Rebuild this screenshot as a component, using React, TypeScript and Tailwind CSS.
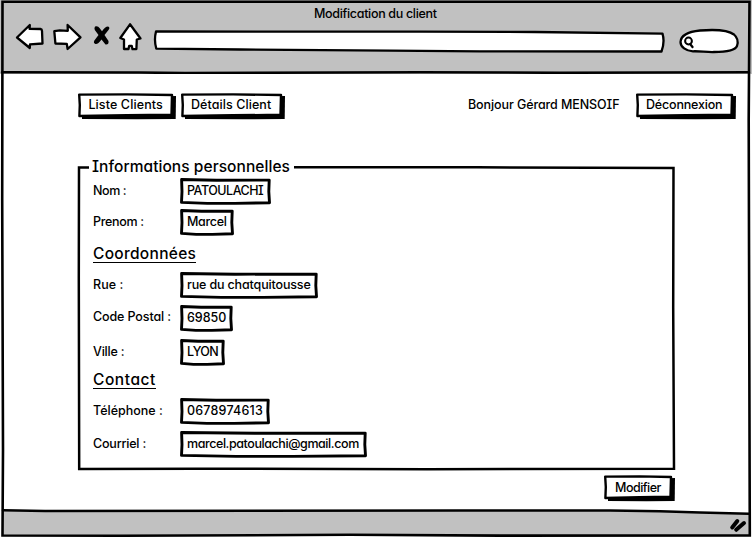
import type { ReactNode } from 'react';

const label = 'whitespace-nowrap text-[12.5px] font-medium leading-[16px]';

function SketchBox({ w, h }: { w: number; h: number }) {
  return (
    <svg className="absolute inset-0" width={w} height={h} fill="none" stroke="#000" strokeWidth="2.9" strokeLinejoin="round">
      <path
        d={`M1.6 1.5 L${w * 0.4} 2.2 L${w - 1.8} 2.1 L${w - 2.2} ${h * 0.5} L${w - 1.5} ${h - 2.3} L${w * 0.6} ${h - 1.6} L${w * 0.3} ${h - 1.6} L1.5 ${h - 2.6} L2 ${h * 0.5} Z`}
        fill="#fff"
      />
    </svg>
  );
}

function Field({ name, value, w, h = 27, nameCls, valueCls, cls, textTop = 'pt-[5px]' }: {
  name: string; value: string; w: number; h?: number; nameCls: string; valueCls: string; cls: string; textTop?: string;
}) {
  return (
    <div className={`flex ${cls}`}>
      <div className={`w-[87px] ${textTop} ${label} ${nameCls}`}>{name}</div>
      <div className="relative" style={{ width: w, height: h }}>
        <SketchBox w={w} h={h} />
        <div className={`relative pl-[7px] pt-[5px] ${label} ${valueCls}`}>{value}</div>
      </div>
    </div>
  );
}

function SketchButton({ w, children, cls }: { w: number; children: ReactNode; cls: string }) {
  return (
    <button className="relative block h-[27px] text-left" style={{ width: w }}>
      <svg className="absolute inset-0" width={w} height="27">
        <path d={`M4 5 L${w} 3 L${w - 0.3} 26 L${w * 0.6} 26.3 L4 26 Z`} />
        <path
          d={`M1.2 1.6 L${w * 0.5} 1.4 L${w - 4} 2 L${w - 4.5} 21.8 L${w * 0.5} 22.3 L1.4 23 L1.8 12 Z`}
          fill="#fff" stroke="#000" strokeWidth="2.4" strokeLinejoin="round"
        />
      </svg>
      <span className={`relative block h-[27px] ${label} ${cls}`}>{children}</span>
    </button>
  );
}

function Heading({ children, cls }: { children: ReactNode; cls: string }) {
  return <h2 className={`w-fit whitespace-nowrap border-b border-black text-[15.5px] font-medium leading-[17px] ${cls}`}>{children}</h2>;
}

function Header() {
  return (
    <header className="relative h-[74px] bg-[#c1c1c1]">
      <svg className="absolute inset-0" width="752" height="74" fill="#fff" stroke="#000" strokeWidth="2.3" strokeLinejoin="round" strokeLinecap="round">
        <path d="M17 37.5 L29.8 25 L29.6 28.9 L40.5 29 Q42 29.2 42 31 L42.5 43.5 L30 44.3 L29.8 48 Z" />
        <path d="M54.3 31.2 L60 30.4 L67.8 30.8 L67.6 25 L80.5 37.3 L67.6 49 L66.8 43.9 L55.4 43.5 Z" />
        <path d="M95 26.5 Q98 25.5 99.5 28 L102 31.3 Q105 26.5 108 26.5 Q110.5 27.5 108.5 30 L104.5 35 L108.5 41 Q109 45 105.5 44.5 L101.5 39.5 Q97.5 45 95 43.8 Q92.5 42.5 95.5 39 L98.5 35 L94.8 30 Q94 28 95 26.5 Z" fill="#000" stroke="none" />
        <path d="M130 24.3 L140.5 38.5 L136.8 39.5 L136.4 49 L132.5 49.2 L131.7 45.8 L129.2 45.8 L128.5 49 L124 49 L124 39.5 L120.3 38 Z" />
        <path d="M156 31.5 L420 31.6 L535 32 L662.5 33.6 Q665 42 661.5 51.5 L480 51.4 L390 50.6 L240 49.5 L156.3 48.7 Q153.8 40 156 31.5 Z" strokeWidth="2.3" />
        <path d="M680.5 42 C681 34 690 31.5 700 30.5 C713 29.5 727 29 734 34.5 C738 38 738 43 737 46 C735 51 724 52 714 52 C707 52.3 700 51 693 51.3 C686 51 680.5 47 680.5 42 Z" />
        <circle cx="688.5" cy="41" r="3.4" strokeWidth="2" />
        <path d="M690.5 44.5 L692.5 47" strokeWidth="2.3" />
        <path d="M2 72.2 L140 72.6 L185 73 L420 72.3 L560 72.8 L749 72.2" strokeWidth="2.5" />
      </svg>
      <h1 className={`relative pl-[314px] pt-[6px] tracking-[-0.32px] ${label}`}>Modification du client</h1>
    </header>
  );
}

function Footer() {
  return (
    <footer className="relative h-[30px]">
      <svg className="absolute inset-0" width="752" height="30" stroke="#000" strokeLinecap="round">
        <path d="M3 2.7 L450 2.4 L650 2.7 L749 5.7 L749 27 L500 28 L3 27.5 Z" fill="#c1c1c1" stroke="none" />
        <path d="M3 2.3 L45 3 L460 2.5 L610 2.5 L660 3.2 L700 4.4 L749 5.8" fill="none" strokeWidth="2.5" />
        <path d="M732.2 19.5 L737.3 13 M736.2 21.8 L744 15" strokeWidth="4" />
      </svg>
    </footer>
  );
}

export default function App() {
  return (
    <div className="relative h-[538px] w-[752px] overflow-hidden bg-white font-['Inter',sans-serif] text-black [font-feature-settings:'cv11','cv08']">
      <Header />
      <main className="h-[434px] pt-[19px]">
        <nav className="flex pl-[78px]">
          <SketchButton w={98} cls="pt-[4px] pl-[10.4px] tracking-[0.12px]">Liste Clients</SketchButton>
          <div className="w-[5px]" />
          <SketchButton w={104} cls="pt-[4px] pl-[10px] tracking-[0.08px]">Détails Client</SketchButton>
          <div className={`ml-[183px] w-[168px] pt-[4px] tracking-[-0.09px] ${label}`}>Bonjour Gérard MENSOIF</div>
          <SketchButton w={100} cls="pt-[4px] pl-[10px] tracking-[-0.18px]">Déconnexion</SketchButton>
        </nav>

        <section className="relative ml-[77px] mt-[38px] h-[313px] w-[599px]">
          <svg className="absolute inset-0" width="599" height="313" fill="none" stroke="#000" strokeWidth="2.5">
            <path d="M12 9.5 L2 9.5 L1.8 120 L2.2 311 L120 310.7 L350 311.3 L597 310.7 L596.2 150 L596.5 10 L400 9.3 L217 9.3" />
          </svg>
          <div className="relative pl-[16px]">
            <h2 className="-ml-px h-[19px] whitespace-nowrap text-[15.5px] font-medium leading-[18px] tracking-[0.06px]">Informations personnelles</h2>
            <Field name="Nom :" value="PATOULACHI" w={91} nameCls="tracking-[-0.4px]" valueCls="tracking-[-0.48px]" cls="mt-[1px]" />
            <Field name="Prenom :" value="Marcel" w={54} nameCls="tracking-[-0.3px]" valueCls="tracking-[-0.3px]" cls="mt-[4px]" />
            <div className="h-[36px] pt-[9px]"><Heading cls="tracking-[0.3px]">Coordonnées</Heading></div>
            <Field name="Rue :" value="rue du chatquitousse" w={138} nameCls="tracking-[0.05px]" valueCls="tracking-[-0.15px]" cls="" />
            <Field name="Code Postal :" value="69850" w={53} nameCls="tracking-[-0.12px]" valueCls="" cls="mt-[6px]" textTop="pt-[4px]" />
            <Field name="Ville :" value="LYON" w={45} nameCls="tracking-[-0.2px]" valueCls="tracking-[-0.65px]" cls="mt-[7px]" />
            <div className="h-[32px] pt-[5px]"><Heading cls="tracking-[0.55px]">Contact</Heading></div>
            <Field name="Téléphone :" value="0678974613" w={90} nameCls="tracking-[0px]" valueCls="tracking-[0.2px]" cls="" />
            <Field name="Courriel :" value="marcel.patoulachi@gmail.com" w={187} nameCls="tracking-[-0.2px]" valueCls="tracking-[-0.42px]" cls="mt-[6px]" />
          </div>
        </section>

        <div className="mt-[4px] pl-[604px]">
          <SketchButton w={71} cls="pt-[5px] pl-[11px] tracking-[-0.5px]">Modifier</SketchButton>
        </div>
      </main>
      <Footer />
      <svg className="pointer-events-none absolute inset-0" width="752" height="538" fill="none" stroke="#000" strokeWidth="2.6">
        <path d="M2.5 1.8 L749.5 1.8 L748.7 120 L749.3 350 L749.8 535.5 L500 535.6 L350 534.8 L120 535.8 L2.5 535.5 L3 450 L2.2 200 Z" />
      </svg>
    </div>
  );
}
